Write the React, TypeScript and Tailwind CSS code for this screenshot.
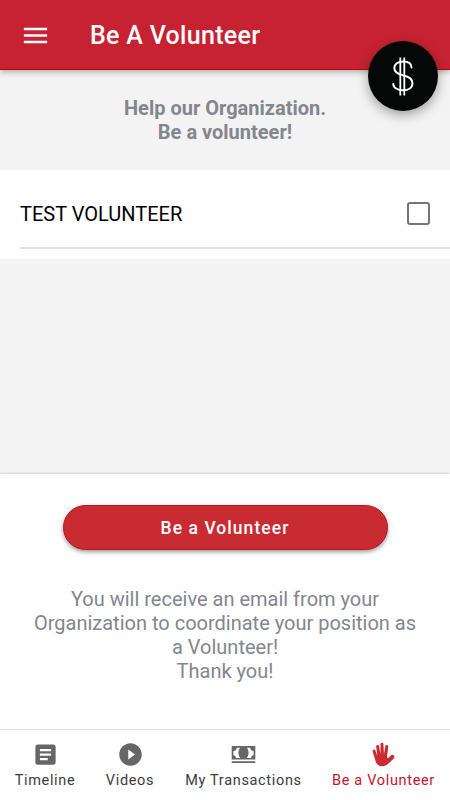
import React, { useState } from "react";
import { IoMdCash, IoMdHand } from "react-icons/io";
import { MdArticle, MdMenu, MdPlayCircleFilled } from "react-icons/md";

interface TabProps {
  label: string;
  icon: React.ReactNode;
  active?: boolean;
  className?: string;
}

const Tab: React.FC<TabProps> = ({ label, icon, active, className = "" }) => (
  <button
    type="button"
    className={`flex flex-col items-center pt-[11px] ${
      active ? "text-[#c8102e]" : "text-[#3c3c3c]"
    } ${className}`}
  >
    <span className={active ? "text-[#c82c32]" : "text-[#666666]"}>{icon}</span>
    <span className="mt-1 text-[14.5px] leading-[18px] tracking-[0.67px] whitespace-nowrap">
      {label}
    </span>
  </button>
);

const DonateButton: React.FC = () => (
  <button
    type="button"
    aria-label="Donate"
    className="absolute top-[41px] left-[367.5px] z-10 flex h-[70px] w-[70px] items-center justify-center rounded-full bg-[#050807] shadow-[0_4px_12px_rgba(0,0,0,0.35)]"
  >
    <svg
      width="22"
      height="40"
      viewBox="0 0 22 40"
      fill="none"
      stroke="white"
      strokeLinecap="round"
    >
      <path
        d="M19.5 11.5C19.5 7.500 16 5.500 11 5.500S2.300 8 2.300 12C2.300 16 5.500 18 11 19.200S20.500 22.500 20.500 27.200C20.500 31.700 16.500 34.200 11 34.200S1.300 31.700 1.300 28"
        strokeWidth="2"
      />
      <path
        d="M8.300 1.500V39.500M12.300 1.500V39.500"
        strokeWidth="1.8"
        strokeLinecap="butt"
      />
    </svg>
  </button>
);

export default function App() {
  const [checked, setChecked] = useState(false);

  return (
    <div className="relative flex h-[800px] w-[450px] flex-col overflow-hidden bg-[#f3f3f3] font-['Roboto',sans-serif]">
      <header className="flex h-[70px] shrink-0 items-center border-b border-[#c00010] bg-[#c62232] pl-[19.5px] text-white shadow-[0_2px_6px_rgba(0,0,0,0.3)]">
        <MdMenu className="mt-px h-[31px] w-[31px]" />
        <h1 className="mt-0.5 ml-[39.5px] text-[25px] font-medium tracking-[0.3px]">
          Be A Volunteer
        </h1>
      </header>
      <DonateButton />

      <main className="flex-1">
        <div className="h-[100px] pt-[26px] text-center text-[20px] leading-6 font-bold text-[#83868d]">
          Help our Organization.
          <br />
          Be a volunteer!
        </div>
        <div className="h-[89px] bg-white pl-5">
          <label className="flex h-[79px] items-center justify-between border-b-2 border-[#e3e3e3] pt-[10px] pr-5">
            <span className="pt-px text-[20px] text-black">TEST VOLUNTEER</span>
            <input
              type="checkbox"
              checked={checked}
              onChange={() => setChecked(!checked)}
              className="h-[23px] w-[23px] appearance-none rounded-[3px] border-2 border-[#757575] checked:bg-[#c82c32]"
            />
          </label>
        </div>
      </main>

      <footer className="shrink-0 bg-white shadow-[0_-1px_2px_rgba(0,0,0,0.12)]">
        <div className="flex h-[255px] flex-col items-center pt-[31px]">
          <button
            type="button"
            className="h-[45px] w-[325px] rounded-full border border-[#c4121a] bg-[#c82c32] pt-px text-[17.5px] font-medium tracking-[1.05px] text-white shadow-[0_2px_4px_rgba(0,0,0,0.4)]"
          >
            Be a Volunteer
          </button>
          <p className="mt-[37px] w-[390px] text-center text-[20px] leading-6 text-[#83868d]">
            You will receive an email from your Organization to coordinate your
            position as a Volunteer!
            <br />
            Thank you!
          </p>
        </div>
        <nav className="flex h-[71px] items-start border-t border-[#e0e0e0]">
          <Tab
            label="Timeline"
            icon={<MdArticle size={27} />}
            className="w-[90px]"
          />
          <Tab
            label="Videos"
            icon={<MdPlayCircleFilled size={27} />}
            className="w-20"
          />
          <Tab
            label="My Transactions"
            icon={<IoMdCash size={27} />}
            className="w-[147px]"
          />
          <Tab
            label="Be a Volunteer"
            icon={<IoMdHand size={27} />}
            active
            className="w-[133px]"
          />
        </nav>
      </footer>
    </div>
  );
}
